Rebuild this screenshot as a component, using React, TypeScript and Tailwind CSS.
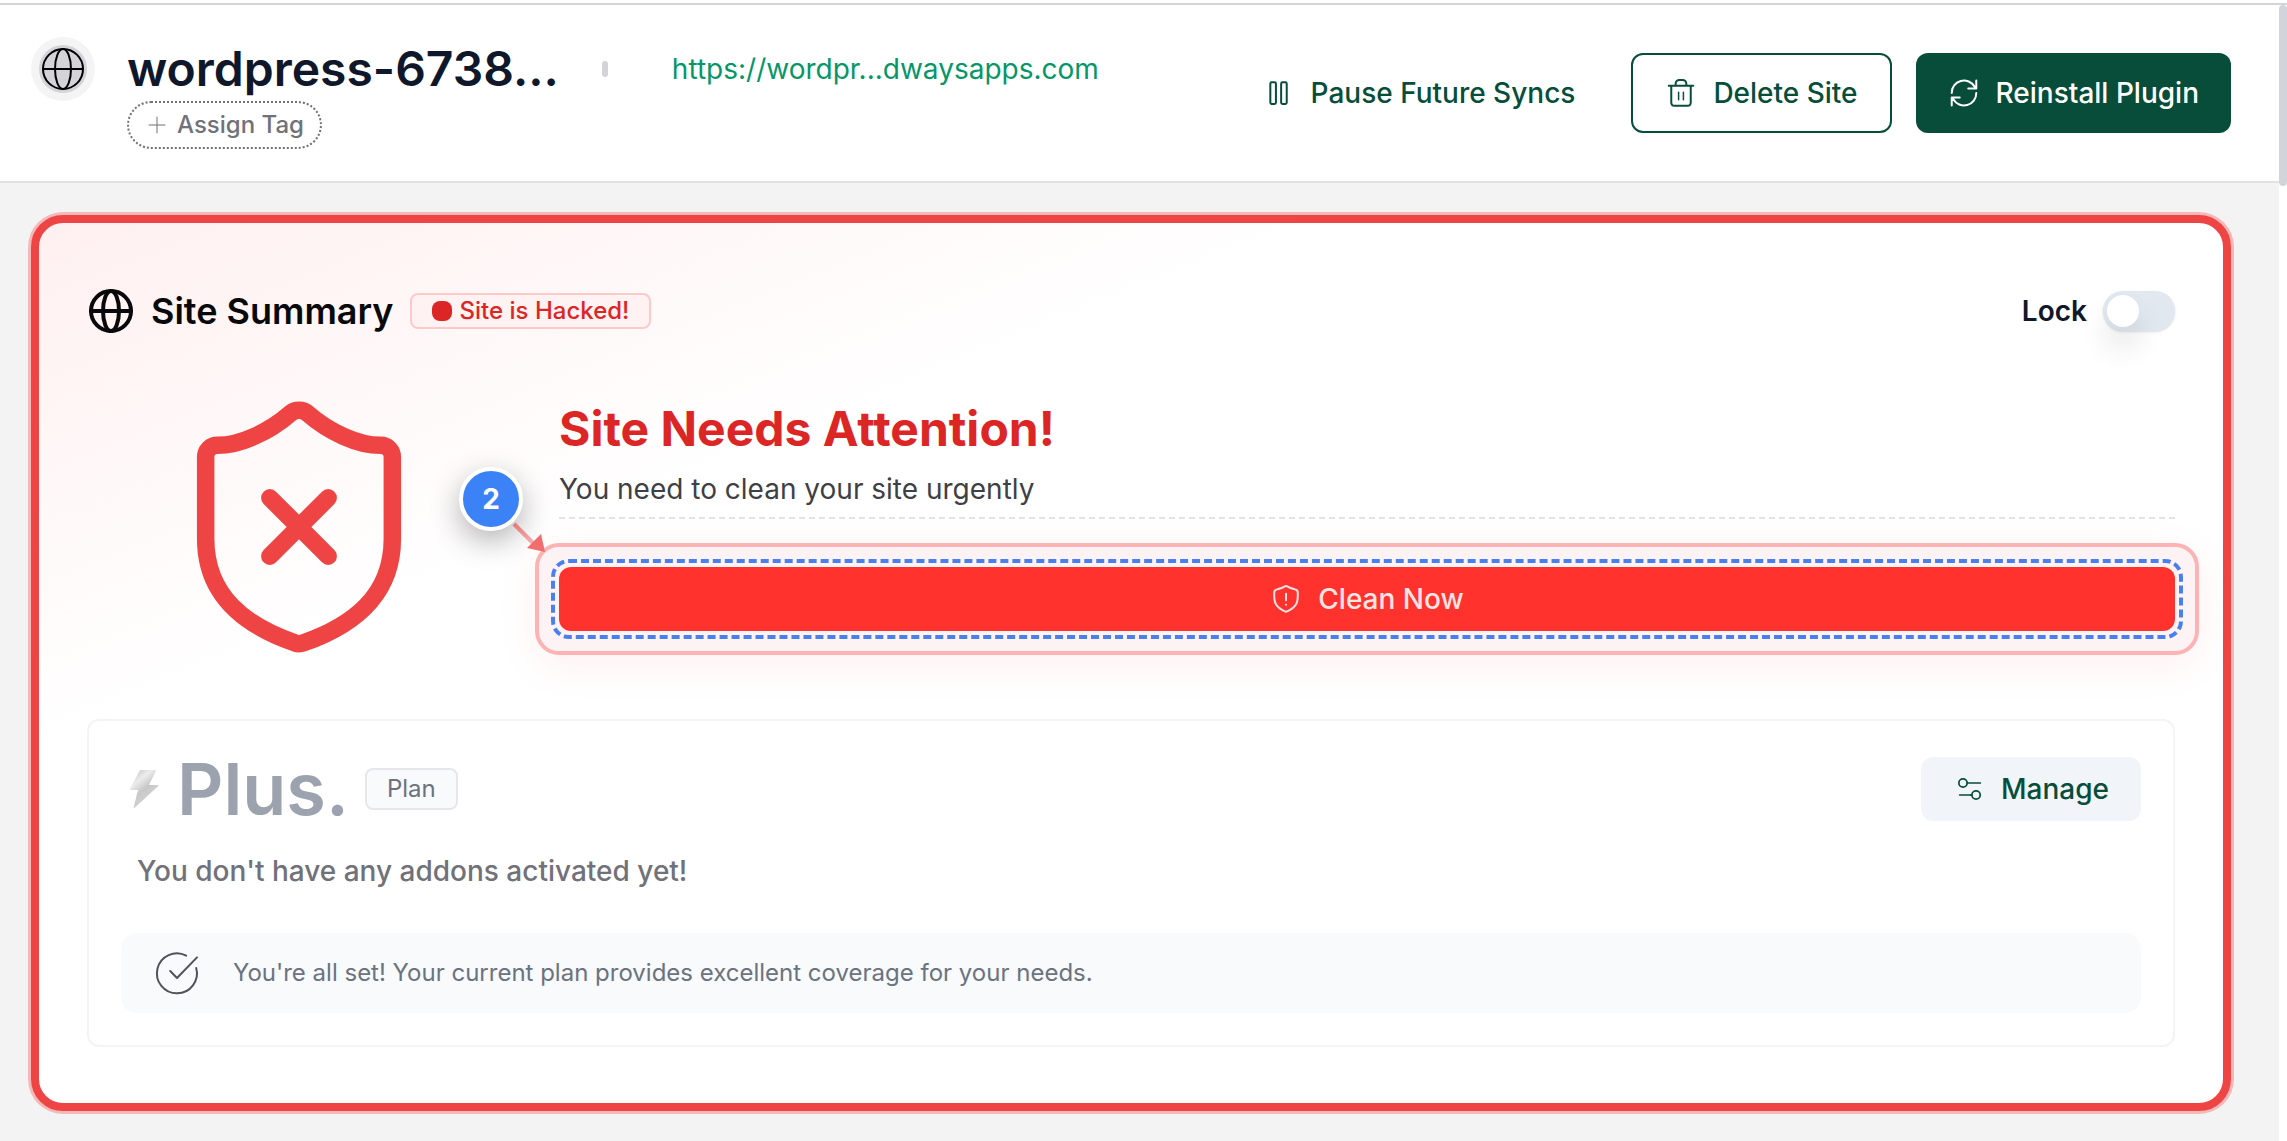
import type { ReactNode } from "react";

function Icon({
  className = "size-8",
  width = 1.5,
  children,
}: {
  className?: string;
  width?: number;
  children: ReactNode;
}) {
  return (
    <svg
      viewBox="0 0 24 24"
      fill="none"
      stroke="currentColor"
      strokeWidth={width}
      strokeLinecap="round"
      strokeLinejoin="round"
      aria-hidden="true"
      className={`shrink-0 ${className}`}
    >
      {children}
    </svg>
  );
}

function GlobeIcon({ className, width }: { className: string; width: number }) {
  return (
    <Icon className={className} width={width}>
      <circle cx="12" cy="12" r="10" />
      <ellipse cx="12" cy="12" rx="4" ry="10" />
      <path d="M2 12h20" />
    </Icon>
  );
}

function Header() {
  return (
    <header className="flex items-center justify-between border-b-2 border-[#e2e2e2] bg-white py-8 pr-12 pl-[31px]">
      <div className="flex items-start gap-8">
        <div className="flex size-16 items-center justify-center rounded-full bg-[#f4f4f5]">
          <div className="flex size-12 items-center justify-center rounded-full bg-[#d4d4d8] text-black">
            <GlobeIcon className="size-12" width={1} />
          </div>
        </div>
        <div>
          <div className="flex h-16 items-center">
            <h1 className="text-[48px] leading-[64px] font-semibold text-[#0f172a]">wordpress-6738...</h1>
            <span className="mr-16 ml-[43px] h-4 w-1.5 rounded-full bg-[#d4d4d8]" />
            <a href="#site" className="text-[28px] leading-10 text-[#059669]">
              https://wordpr...dwaysapps.com
            </a>
          </div>
          <button
            type="button"
            className="flex h-12 items-center gap-2 rounded-full border-2 border-dotted border-[#71717a] px-4 text-[24px] leading-8 font-medium text-[#71717a]"
          >
            <Icon className="size-6" width={1}>
              <path d="M12 4v16M4 12h16" />
            </Icon>
            Assign Tag
          </button>
        </div>
      </div>
      <div className="flex items-center gap-6 text-[28px] leading-10 font-medium text-[#064e3b]">
        <button type="button" className="flex h-20 items-center gap-4 px-8">
          <Icon>
            <rect x="5.5" y="4" width="4.2" height="16.2" rx="1" />
            <rect x="13.6" y="4" width="4.2" height="16.2" rx="1" />
          </Icon>
          Pause Future Syncs
        </button>
        <button type="button" className="flex h-20 items-center gap-4 rounded-xl border-2 border-[#064e3b] px-8">
          <Icon>
            <path d="M2.8 6.5h18.4M8 6.5V5a2.8 2.8 0 0 1 2.8-2.8h2.4A2.8 2.8 0 0 1 16 5v1.5M4.7 6.5v12.9a2.2 2.2 0 0 0 2.2 2.2h10.2a2.2 2.2 0 0 0 2.2-2.2V6.5" />
            <path d="M10.2 11.5v5.5M13.8 11.5v5.5" strokeWidth="1.1" />
          </Icon>
          Delete Site
        </button>
        <button type="button" className="flex h-20 items-center gap-4 rounded-xl bg-[#074d39] px-8 text-white">
          <Icon>
            <path d="M2.8 12a9.2 9.2 0 0 1 17.2-4.7M21.2 2.6v6h-6M21.2 12a9.2 9.2 0 0 1-17.2 4.7M2.8 21.4v-6h6" />
          </Icon>
          Reinstall Plugin
        </button>
      </div>
    </header>
  );
}

function StepMarker() {
  return (
    <>
      <div className="absolute -top-[100px] -left-[100px] flex size-16 items-center justify-center rounded-full border-4 border-white bg-[#3b82f6] text-[28px] leading-8 font-bold text-white shadow-[0_10px_30px_rgba(0,0,0,0.3)]">
        2
      </div>
      <svg viewBox="0 0 48 48" aria-hidden="true" className="absolute -top-[52px] -left-[52px] size-12">
        <defs>
          <linearGradient id="shaft" x1="0" y1="0" x2="1" y2="1">
            <stop offset="0" stopColor="#e57373" />
            <stop offset="1" stopColor="#f4c4c4" />
          </linearGradient>
        </defs>
        <path d="M5.5 10.5l3-3 23 23-3 3z" fill="url(#shaft)" />
        <path d="M38 37l-4-18-14 14z" fill="#f26d6d" />
      </svg>
    </>
  );
}

function CleanAction() {
  return (
    <div className="relative mt-12">
      <div className="pointer-events-none absolute -inset-6 rounded-3xl border-4 border-[#fdb3b3] bg-[#fef3f4] shadow-[0_10px_40px_rgba(239,68,68,0.08)]" />
      <div className="pointer-events-none absolute -inset-2 rounded-[18px] border-4 border-dashed border-[#4a80ee]" />
      <button
        type="button"
        className="relative flex h-16 w-full items-center justify-center gap-4 rounded-xl bg-[#ff322d] text-[28px] leading-10 font-medium text-[#ffe4e6]"
      >
        <Icon>
          <path d="M12 2.2c.6 0 1 .3 1.6.7 1.7 1.1 3.4 1.4 5.2 1.9 1.2.3 1.9.7 2 2 .3 6.5.2 11.2-8.8 14.9C3 18 2.900 13.300 3.200 6.800c.1-1.3.8-1.7 2-2C7 4.300 8.700 4 10.400 2.900c.6-.4 1-.7 1.600-.7zM12 8v5M12 16.300v.1" />
        </Icon>
        Clean Now
      </button>
      <StepMarker />
    </div>
  );
}

function Summary() {
  return (
    <>
      <div className="flex h-10 items-center justify-between">
        <div className="flex items-center">
          <GlobeIcon className="size-12 text-[#09090b]" width={2} />
          <h2 className="ml-4 text-[36px] leading-10 font-semibold text-[#09090b]">Site Summary</h2>
          <span className="ml-4 flex h-9 items-center gap-2 rounded-lg border-2 border-[#ffc9c9] bg-[#fef2f2] px-5 text-[24px] leading-8 font-medium text-[#dc2626]">
            <span className="size-5 rounded-lg bg-[#dc2626]" />
            Site is Hacked!
          </span>
        </div>
        <label className="flex items-center gap-4 text-[28px] leading-10 font-semibold text-[#0f172a]">
          Lock
          <span className="flex h-10 w-[72px] items-center rounded-full bg-[#e2e8f0] px-1 shadow-sm">
            <input type="checkbox" className="peer sr-only" />
            <span className="size-8 rounded-full bg-white shadow-[0_20px_30px_rgba(0,0,0,0.12)] peer-checked:ml-auto" />
          </span>
        </label>
      </div>
      <div className="mt-14 flex items-start gap-12">
        <div className="flex w-[424px] shrink-0 justify-center">
          <Icon className="size-[280px] text-[#ef4444]">
            <path d="M20 13c0 5-3.5 7.5-7.66 8.95a1 1 0 0 1-.67-.01C7.5 20.5 4 18 4 13V6a1 1 0 0 1 1-1c2 0 4.5-1.2 6.24-2.72a1.17 1.17 0 0 1 1.52 0C14.51 3.81 17 5 19 5a1 1 0 0 1 1 1z" />
            <path d="m14.5 9.5-5 5M9.5 9.5l5 5" />
          </Icon>
        </div>
        <div className="grow pt-3.5">
          <h3 className="text-[48px] leading-[56px] font-bold text-[#dc2626]">Site Needs Attention!</h3>
          <p className="mt-3 border-b-2 border-dashed border-[#e4e4e7] pb-2 text-[28px] leading-10 text-[#3f3f46]">
            You need to clean your site urgently
          </p>
          <CleanAction />
        </div>
      </div>
    </>
  );
}

function PlanPanel() {
  return (
    <div className="mt-13 rounded-xl border-2 border-[#f4f4f5] px-8 pt-9 pb-8">
      <div className="flex h-16 items-center justify-between">
        <div className="flex items-center">
          <svg viewBox="0 0 40 40" aria-hidden="true" className="size-10">
            <defs>
              <linearGradient id="bolt" x1="0.2" y1="0" x2="0.8" y2="1">
                <stop offset="0" stopColor="#c8c8c8" />
                <stop offset="0.25" stopColor="#ececec" />
                <stop offset="0.5" stopColor="#c8c8c8" />
                <stop offset="1" stopColor="#dcdcdc" />
              </linearGradient>
            </defs>
            <path
              d="M20 1h14q1.500 0 .8 1.300L28 16h8.500q1.500 0 .6 1.300L14 38.500q-1.700 1.500-1.200-.7L17 21h-7q-1.500 0-.8-1.500l9-17Q18.800 1 20 1z"
              fill="url(#bolt)"
            />
          </svg>
          <h3 className="ml-4 text-[72px] leading-[64px] font-semibold text-[#9ca3af]">Plus.</h3>
          <span className="ml-4 flex h-[42px] items-center rounded-lg border-2 border-[#e5e7eb] bg-[#f9fafb] px-5 text-[24px] leading-8 text-[#6b7280]">
            Plan
          </span>
        </div>
        <button
          type="button"
          className="flex h-16 items-center gap-4 rounded-xl bg-[#f1f5f9] px-8 text-[28px] leading-10 font-medium text-[#064e3b]"
        >
          <Icon width={1.3}>
            <circle cx="7.500" cy="7.500" r="3.100" />
            <path d="M10.800 7.500H20.500M5 16.500h8" />
            <circle cx="17.300" cy="16.500" r="3.100" />
            <path d="M13 16.500h1" />
          </Icon>
          Manage
        </button>
      </div>
      <p className="mt-[30px] px-4 text-[28px] leading-10 font-medium text-[#71717a]">
        You don't have any addons activated yet!
      </p>
      <div className="mt-[42px] flex h-20 items-center gap-8 rounded-2xl bg-[#f8fafc] px-8 text-[24px] leading-8 text-[#6b7280]">
        <Icon className="size-12 text-[#52525b]" width={1}>
          <path d="M21.600 9.500a10 10 0 1 1-5-6.200" />
          <path d="M8.600 11l3.400 3.500L22 4.200" />
        </Icon>
        You're all set! Your current plan provides excellent coverage for your needs.
      </div>
    </div>
  );
}

export default function App() {
  return (
    <div className="flex min-h-screen flex-col bg-white font-['Inter',sans-serif]">
      <div className="h-[5px] border-b-2 border-[#d4d4dc]" />
      <div className="flex grow">
        <div className="flex min-w-0 grow flex-col">
          <Header />
          <main className="grow bg-[#f3f3f3] pt-8 pr-12 pb-7 pl-[31px]">
            <section className="rounded-[32px] border-8 border-[#ef4444] bg-white bg-linear-to-br from-[#fff0f0] to-white to-30% px-12 pt-[68px] pb-14 shadow-[0_0_0_3px_rgba(248,113,113,0.45)]">
              <Summary />
              <PlanPanel />
            </section>
          </main>
        </div>
        <div className="w-2 shrink-0">
          <div className="h-[181px] rounded-full bg-[#d1d5db]" />
        </div>
      </div>
    </div>
  );
}
